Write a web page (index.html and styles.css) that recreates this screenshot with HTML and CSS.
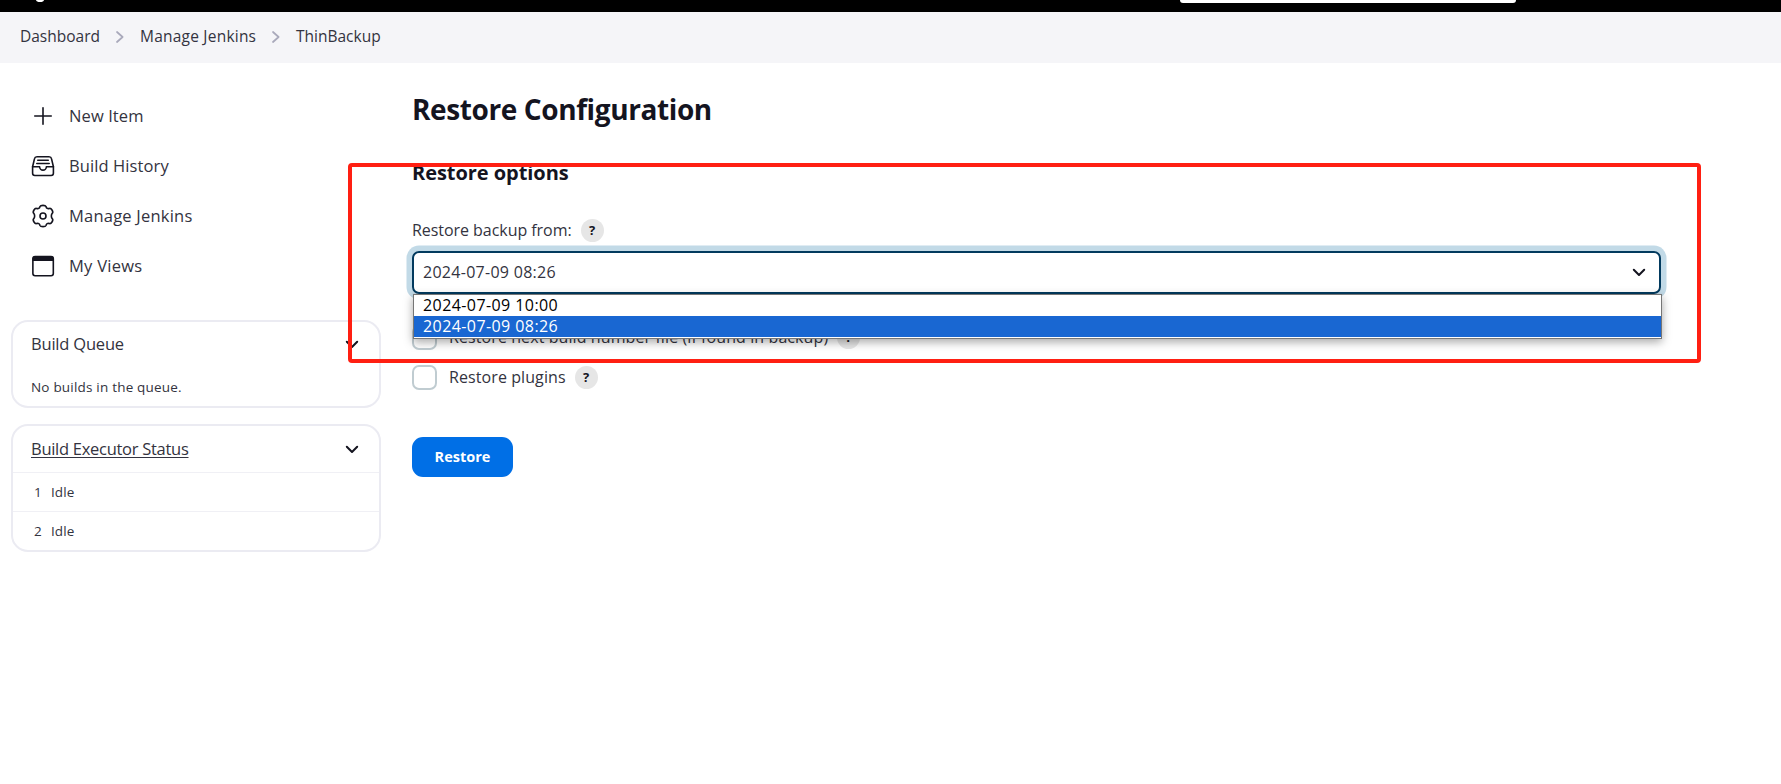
FILE: index.html
```html
<!DOCTYPE html>
<html lang="en">
<head>
<meta charset="utf-8">
<title>Restore Configuration [Jenkins]</title>
<link rel="stylesheet" href="styles.css">
</head>
<body>
<header class="topbar">
  <svg class="brand-tail" width="10" height="2" viewBox="0 0 10 2"><path d="M1 0h8q-.5 2-4 2T1 0z" fill="#fff"/></svg>
  <div class="searchbox"></div>
</header>
<nav class="breadcrumbs">
  <span class="crumb c1">Dashboard</span>
  <svg class="sep" width="8" height="12" viewBox="0 0 8 12"><path d="M1 1l5.600 5L1 11"/></svg>
  <span class="crumb c2">Manage Jenkins</span>
  <svg class="sep" width="8" height="12" viewBox="0 0 8 12"><path d="M1 1l5.600 5L1 11"/></svg>
  <span class="crumb c3">ThinBackup</span>
</nav>
<div class="page">
  <aside class="side">
    <ul class="tasks">
      <li><svg class="icon" viewBox="0 0 512 512"><path d="M256 80v352M432 256H80"/></svg><span class="t1">New Item</span></li>
      <li><svg class="icon" viewBox="0 0 512 512"><path d="M384 60H128c-30 0-48 14-53 40L34 272v138a48 48 0 0 0 48 48h348a48 48 0 0 0 48-48V272l-41-172c-5-27-23-40-53-40z"/><path d="M34 272h150M328 272h150M184 272a72 72 0 0 0 144 0M144 134h224M124 204h264"/></svg><span class="t2">Build History</span></li>
      <li><svg class="icon" viewBox="0 0 24 24"><circle cx="12" cy="12" r="3"/><path d="M12 1.400C13.600 1.400 14.700 1.700 15 2.500C15.400 4.300 16.600 5 18.400 4.500C19.600 4.100 20.300 4.900 21 6C21.800 7.300 22.300 8.300 21.400 9.200C20 10.500 20 13.500 21.400 14.800C22.300 15.700 21.800 16.700 21 18C20.300 19.100 19.600 19.900 18.400 19.500C16.600 19 15.400 19.700 15 21.500C14.700 22.300 13.600 22.600 12 22.600C10.400 22.600 9.300 22.300 9 21.500C8.600 19.700 7.400 19 5.600 19.500C4.400 19.900 3.700 19.100 3 18C2.200 16.700 1.700 15.700 2.600 14.800C4 13.500 4 10.500 2.600 9.200C1.700 8.300 2.200 7.300 3 6C3.700 4.900 4.400 4.100 5.600 4.500C7.400 5 8.600 4.300 9 2.500C9.300 1.700 10.400 1.400 12 1.400z"/></svg><span class="t3">Manage Jenkins</span></li>
      <li><svg class="icon" viewBox="0 0 512 512"><rect x="40" y="54" width="436" height="410" rx="48"/><path class="solid" d="M32 148V94q0-48 48-48h356q48 0 48 48v54z"/></svg><span class="t4">My Views</span></li>
    </ul>
    <section class="pane">
      <div class="pane-head"><span class="p1">Build Queue</span><svg class="chev" viewBox="0 0 14 9"><path d="M1.800 1.800L7 7l5.200-5.200"/></svg></div>
      <p class="empty">No builds in the queue.</p>
    </section>
    <section class="pane">
      <div class="pane-head tall"><a class="p2">Build Executor Status</a><svg class="chev" viewBox="0 0 14 9"><path d="M1.800 1.800L7 7l5.200-5.200"/></svg></div>
      <div class="exec"><span>1</span><span>Idle</span></div>
      <div class="exec"><span>2</span><span>Idle</span></div>
    </section>
  </aside>
  <main class="main">
    <h1>Restore Configuration</h1>
    <h2>Restore options</h2>
    <div class="field-label"><span class="l1">Restore backup from:</span><span class="help">?</span></div>
    <div class="select">
      <span class="value">2024-07-09 08:26</span>
      <svg class="chev" viewBox="0 0 14 9"><path d="M1.800 1.800L7 7l5.200-5.200"/></svg>
      <div class="options">
        <div class="option">2024-07-09 10:00</div>
        <div class="option chosen">2024-07-09 08:26</div>
      </div>
    </div>
    <div class="check first"><span class="box"></span><span class="l2">Restore next build number file (if found in backup)</span><span class="help">?</span></div>
    <div class="check"><span class="box"></span><span class="l3">Restore plugins</span><span class="help">?</span></div>
    <button class="submit">Restore</button>
  </main>
</div>
<div class="highlight"></div>
</body>
</html>
```
FILE: styles.css
```css
* { box-sizing: border-box; }
body { margin: 0; height: 784px; overflow: hidden; background: #fff; color: #14141f; font-family: "Open Sans", "Noto Sans", sans-serif; font-size: 16px; line-height: 24px; white-space: nowrap; position: relative; }
svg { display: block; flex: none; fill: none; stroke: currentColor; stroke-linecap: round; stroke-linejoin: round; }

.topbar { height: 12px; background: #000; display: flex; align-items: flex-start; padding-left: 35px; }
.brand-tail { stroke: none; }
.searchbox { width: 336px; height: 3px; margin-left: 1135px; background: #fff; border-radius: 0 0 5px 5px; }

.breadcrumbs { height: 51px; padding: 0 0 2px 20px; background: #f5f5f8; display: flex; align-items: center; gap: 16px; color: #333340; }
.sep { stroke: #a9a9bb; stroke-width: 1.700; }
.crumb { font-size: 15.500px; padding-bottom: 2px; }
.c1 { width: 80px; }
.c2 { width: 116px; letter-spacing: .22px; }

.page { display: flex; }
.side { width: 381px; padding: 28px 0 0 11px; }
.tasks { list-style: none; margin: 0 0 29px; padding: 0; color: #333340; }
.tasks li { height: 50px; display: flex; align-items: center; gap: 14px; padding-left: 20px; font-size: 16.500px; letter-spacing: .1px; }
.tasks .t3 { letter-spacing: .22px; }
.tasks .t4 { letter-spacing: .25px; }
.icon { width: 24px; height: 24px; color: #14141f; stroke-width: 34; }
.icon[viewBox="0 0 24 24"] { stroke-width: 1.600; }
.solid { fill: currentColor; stroke: none; }

.pane { border: 2px solid #ebebf2; border-radius: 17px; margin-bottom: 16px; overflow: hidden; }
.pane:first-of-type { height: 88px; }
.pane-head { display: flex; align-items: center; justify-content: space-between; height: 45px; padding: 0 20px 0 18px; font-size: 16.500px; color: #333340; }
.pane-head.tall { height: 46px; }
.chev { width: 14px; height: 9px; color: #14141f; stroke-width: 2; }
.p1 { letter-spacing: -.2px; padding-bottom: 2px; }
.p2 { letter-spacing: -.28px; text-decoration: underline; text-underline-offset: 2px; text-decoration-thickness: 1px; }
.empty { margin: 7px 0 0 18px; font-size: 13.500px; line-height: 26px; letter-spacing: .2px; color: #333340; }
.exec { height: 39px; border-top: 1px solid #f0f0f5; display: flex; align-items: center; gap: 9px; padding-left: 21px; font-size: 13.500px; letter-spacing: .15px; color: #333340; }

.main { padding: 27px 0 0 31px; }
h1 { margin: 0; font-size: 28px; line-height: 38px; font-weight: 700; letter-spacing: -.4px; }
h2 { margin: 30px 0 0; font-size: 20px; line-height: 30px; font-weight: 700; letter-spacing: -.05px; }
.field-label { margin-top: 30px; height: 24px; display: flex; align-items: center; gap: 9px; color: #333340; }
.l1 { letter-spacing: -.05px; }
.help { width: 23px; height: 23px; border-radius: 50%; background: #e6e6e6; color: #14141f; font-size: 13px; line-height: 23px; font-weight: 700; text-align: center; }
.select { position: relative; width: 1249px; height: 43px; margin-top: 9px; border: 2px solid #023a5e; border-radius: 7px; box-shadow: 0 0 0 5.500px #c2dae7; display: flex; align-items: center; justify-content: space-between; padding: 0 13px 0 9px; color: #333340; }
.value { letter-spacing: .28px; padding-bottom: 2px; }
.options { position: absolute; left: -1px; top: 41px; width: 1249px; height: 45px; background: #fff; border: 1px solid #767676; box-shadow: 0 3px 9px rgba(0,0,0,.35); color: #000; }
.option { height: 21px; line-height: 21px; padding-left: 9px; letter-spacing: .42px; }
.chosen { background: #1967d2; color: #fff; }
.check { height: 25px; margin-top: 15px; display: flex; align-items: center; color: #333340; }
.check.first { margin-top: 31px; }
.box { width: 25px; height: 25px; border: 2px solid #c0ccd1; border-radius: 7px; margin-right: 12px; }
.l2, .l3 { letter-spacing: .09px; padding-bottom: 2px; }
.check .help { margin-left: 9px; }
.submit { display: block; margin-top: 47px; width: 101px; height: 40px; border: 0; border-radius: 11px; padding: 0; background: #006fe6; color: #fff; font: 700 14.500px/40px "Open Sans", sans-serif; }

.highlight { position: absolute; left: 348px; top: 163px; width: 1353px; height: 200px; border: 4px solid #ff1f12; border-radius: 4px; }
```
